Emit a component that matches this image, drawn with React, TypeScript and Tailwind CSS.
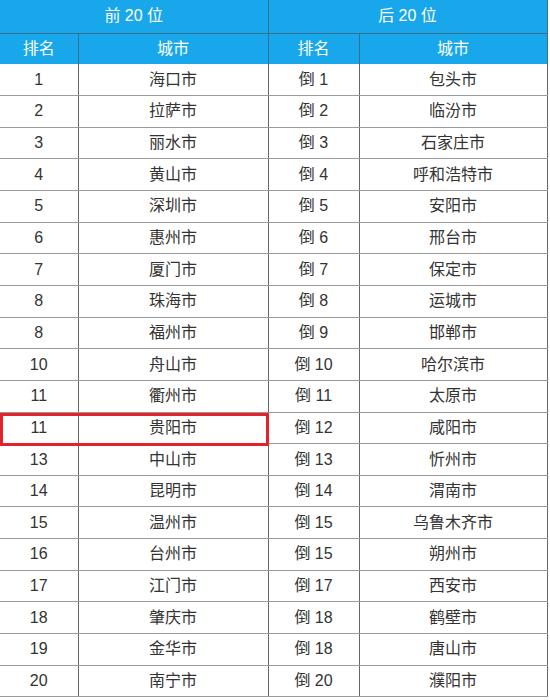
import React from "react";

const rows: [string, string, string, string][] = [
  ["1", "海口市", "倒 1", "包头市"],
  ["2", "拉萨市", "倒 2", "临汾市"],
  ["3", "丽水市", "倒 3", "石家庄市"],
  ["4", "黄山市", "倒 4", "呼和浩特市"],
  ["5", "深圳市", "倒 5", "安阳市"],
  ["6", "惠州市", "倒 6", "邢台市"],
  ["7", "厦门市", "倒 7", "保定市"],
  ["8", "珠海市", "倒 8", "运城市"],
  ["8", "福州市", "倒 9", "邯郸市"],
  ["10", "舟山市", "倒 10", "哈尔滨市"],
  ["11", "衢州市", "倒 11", "太原市"],
  ["11", "贵阳市", "倒 12", "咸阳市"],
  ["13", "中山市", "倒 13", "忻州市"],
  ["14", "昆明市", "倒 14", "渭南市"],
  ["15", "温州市", "倒 15", "乌鲁木齐市"],
  ["16", "台州市", "倒 15", "朔州市"],
  ["17", "江门市", "倒 17", "西安市"],
  ["18", "肇庆市", "倒 18", "鹤壁市"],
  ["19", "金华市", "倒 18", "唐山市"],
  ["20", "南宁市", "倒 20", "濮阳市"],
];

const App = () => {
  return (
    <div
      className="relative w-[550px] h-[700px] bg-white overflow-hidden"
      style={{ fontFamily: '"Liberation Sans", "Noto Sans CJK SC", sans-serif' }}
    >
      <table className="w-[547px] table-fixed border-collapse text-[16px] text-center">
        <colgroup>
          <col className="w-[78px]" />
          <col className="w-[190px]" />
          <col className="w-[91px]" />
          <col className="w-[188px]" />
        </colgroup>
        <thead className="bg-[#19a7eb] text-white">
          <tr className="h-[33px]">
            <th colSpan={2} className="font-normal border-r border-b border-[#3a6f8c]">
              前 20 位
            </th>
            <th colSpan={2} className="font-normal border-r border-b border-[#3a6f8c]">
              后 20 位
            </th>
          </tr>
          <tr className="h-[31px]">
            <th className="font-normal border-r border-[#3a6f8c]">排名</th>
            <th className="font-normal border-r border-[#3a6f8c]">城市</th>
            <th className="font-normal border-r border-[#3a6f8c]">排名</th>
            <th className="font-normal border-r border-[#3a6f8c]">城市</th>
          </tr>
        </thead>
        <tbody className="text-[#333]">
          {rows.map((r, i) => (
            <tr key={i} className="h-[31.65px]">
              <td className="border-b border-r border-b-[#9a9a9a] border-r-[#666]">{r[0]}</td>
              <td className="border-b border-r border-b-[#9a9a9a] border-r-[#666]">{r[1]}</td>
              <td className="border-b border-r border-b-[#9a9a9a] border-r-[#666]">{r[2]}</td>
              <td className="border-b border-r border-b-[#9a9a9a] border-r-[#666]">{r[3]}</td>
            </tr>
          ))}
        </tbody>
      </table>
      <div className="absolute left-0 top-[413px] w-[269px] h-[33px] border-[3px] border-[#e3222b]" />
    </div>
  );
};

export default App;
